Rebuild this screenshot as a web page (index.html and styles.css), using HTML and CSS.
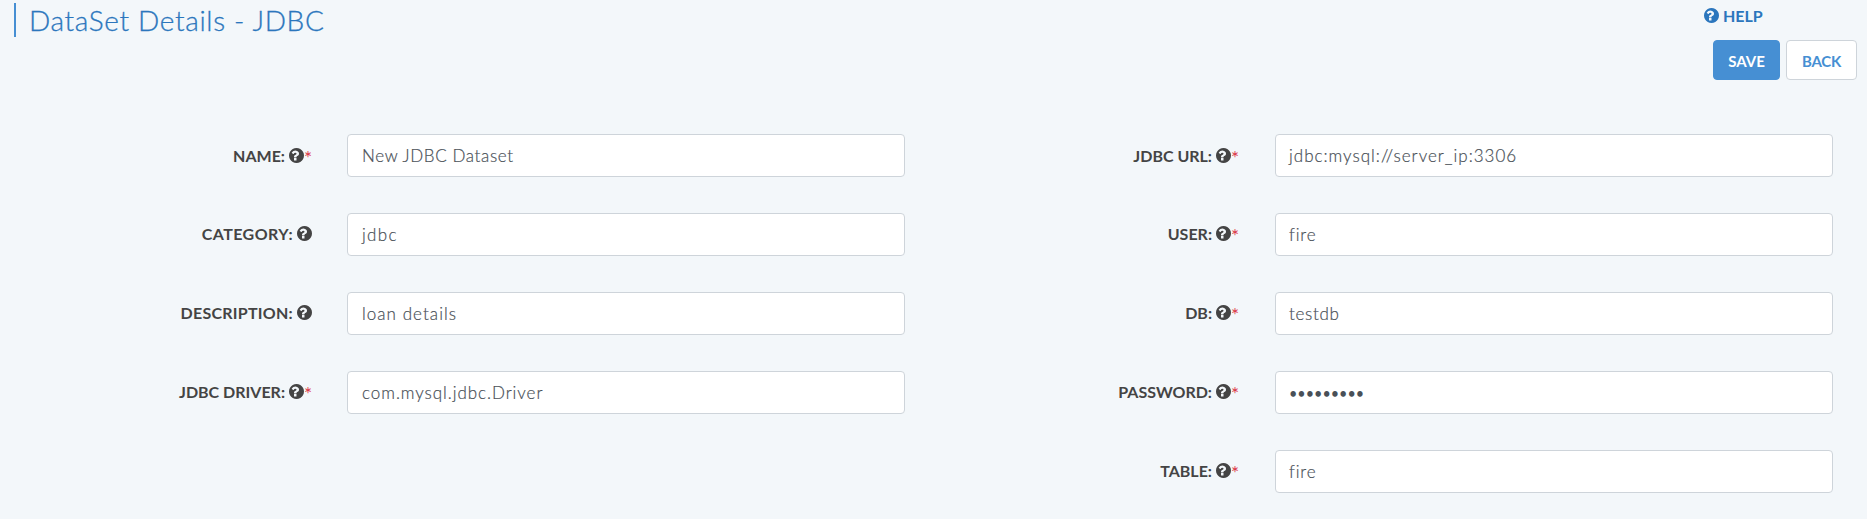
FILE: index.html
```html
<!DOCTYPE html>
<html lang="en">
<head>
<meta charset="utf-8">
<title>DataSet Details - JDBC</title>
<link rel="stylesheet" href="styles.css">
</head>
<body>
<svg class="sprite" aria-hidden="true">
<symbol id="question" viewBox="128 128 1536 1536"><path d="M896 1376v-192q0-14-9-23t-23-9h-192q-14 0-23 9t-9 23v192q0 14 9 23t23 9h192q14 0 23-9t9-23zm256-672q0-88-55.500-163t-138.500-116-170-41q-243 0-371 213-15 24 8 42l132 100q7 6 19 6 16 0 25-12 53-68 86-92 34-24 86-24 48 0 85.500 26t37.500 59q0 38-20 61t-68 45q-63 28-115.500 86.500t-52.500 125.500v36q0 14 9 23t23 9h192q14 0 23-9t9-23q0-19 21.500-49.500t54.500-49.500q32-18 49-28.500t46-35 44.500-48 28-60.500 12.500-81zm512 192q0 209-103 385.500t-279.500 279.500-385.500 103-385.500-103-279.500-279.500-103-385.500 103-385.500 279.500-279.500 385.500-103 385.500 103 279.500 279.500 103 385.500z"/></symbol>
</svg>
<header class="header">
  <h1 class="title">DataSet Details - JDBC</h1>
  <div class="actions">
    <a class="help"><svg class="icon"><use href="#question"/></svg><span>HELP</span></a>
    <div class="buttons">
      <button class="btn btn-save">SAVE</button>
      <button class="btn btn-back">BACK</button>
    </div>
  </div>
</header>
<main class="form">
  <div class="column">
    <div class="row"><label class="label"><span class="t-name">NAME:</span><svg class="icon"><use href="#question"/></svg><span class="star">*</span></label><div class="input"><span class="v-name">New JDBC Dataset</span></div></div>
    <div class="row"><label class="label"><span class="t-category">CATEGORY:</span><svg class="icon"><use href="#question"/></svg></label><div class="input"><span class="v-category">jdbc</span></div></div>
    <div class="row"><label class="label"><span class="t-description">DESCRIPTION:</span><svg class="icon"><use href="#question"/></svg></label><div class="input"><span class="v-description">loan details</span></div></div>
    <div class="row"><label class="label"><span>JDBC DRIVER:</span><svg class="icon"><use href="#question"/></svg><span class="star">*</span></label><div class="input"><span class="v-driver">com.mysql.jdbc.Driver</span></div></div>
  </div>
  <div class="column column-right">
    <div class="row"><label class="label"><span>JDBC URL:</span><svg class="icon"><use href="#question"/></svg><span class="star">*</span></label><div class="input"><span class="v-url">jdbc:mysql://server_ip:3306</span></div></div>
    <div class="row"><label class="label"><span class="t-user">USER:</span><svg class="icon"><use href="#question"/></svg><span class="star">*</span></label><div class="input"><span class="v-fire">fire</span></div></div>
    <div class="row"><label class="label"><span>DB:</span><svg class="icon"><use href="#question"/></svg><span class="star">*</span></label><div class="input"><span class="v-db">testdb</span></div></div>
    <div class="row"><label class="label"><span>PASSWORD:</span><svg class="icon"><use href="#question"/></svg><span class="star">*</span></label><div class="input"><span class="v-password">•••••••••</span></div></div>
    <div class="row"><label class="label"><span>TABLE:</span><svg class="icon"><use href="#question"/></svg><span class="star">*</span></label><div class="input"><span class="v-fire">fire</span></div></div>
  </div>
</main>
</body>
</html>
```
FILE: styles.css
```css
* { box-sizing: border-box; }
body {
  margin: 0;
  height: 519px;
  overflow: hidden;
  background: #f3f7fa;
  color: #444;
  font-family: Lato, "Open Sans", sans-serif;
  font-size: 16px;
}
.sprite { display: none; }
.icon { width: 15px; height: 15px; flex: none; fill: currentColor; }

.header {
  display: flex;
  justify-content: space-between;
  height: 134px;
  padding: 3px 10px 0 14px;
}
.title {
  margin: 0;
  height: 34px;
  padding-left: 13px;
  border-left: 2px solid #468fd3;
  color: #2b76bd;
  font-size: 28px;
  font-weight: 300;
  line-height: 34px;
  letter-spacing: 0.66px;
  white-space: nowrap;
  -webkit-text-stroke: 0.3px currentColor;
}
.actions { width: 144px; }
.help {
  display: flex;
  align-items: center;
  gap: 4px;
  height: 25px;
  margin-left: -9px;
  color: #2b76bd;
  font-weight: 700;
}
.buttons { display: flex; gap: 6px; margin-top: 12px; }
.btn {
  height: 40px;
  padding: 2px 0 0;
  border: 1px solid #468fd3;
  border-radius: 4px;
  font: 700 15px Lato, "Open Sans", sans-serif;
  text-align: center;
}
.btn-save { width: 67px; background: #468fd3; color: #fff; }
.btn-back { width: 71px; background: #fff; border-color: #ced4da; color: #468fd3; letter-spacing: -0.2px; }

.form { display: flex; gap: 186px; padding-left: 162px; }
.column { display: grid; grid-auto-rows: 43px; row-gap: 36px; width: 743px; align-content: start; }
.column-right { width: 742px; }
.row { display: flex; justify-content: space-between; }
.label {
  display: flex;
  align-items: center;
  justify-content: flex-end;
  gap: 4px;
  width: 150px;
  height: 43px;
  font-weight: 700;
  white-space: nowrap;
}
.row + .row .label { padding-bottom: 2px; }
.column-right .label { width: 148px; }
.t-category { letter-spacing: 0.45px; }
.t-description { letter-spacing: 0.25px; }
.star {
  width: 8px;
  height: 19px;
  margin-left: -4px;
  color: #dc3545;
  font-size: 19px;
  font-weight: 400;
  line-height: 23px;
  text-align: center;
}
.input {
  display: flex;
  align-items: center;
  width: 558px;
  height: 43px;
  padding-left: 14px;
  border: 1px solid #ced4da;
  border-radius: 4px;
  background: #fff;
  color: #495057;
  font-size: 17px;
  font-weight: 300;
  white-space: nowrap;
  -webkit-text-stroke: 0.2px currentColor;
}
.column-right .input { padding-left: 13px; }
.v-name { letter-spacing: 0.62px; }
.v-category { letter-spacing: 1.3px; }
.v-description { letter-spacing: 1.05px; }
.v-driver { letter-spacing: 0.95px; }
.v-url { letter-spacing: 1px; }
.v-fire { letter-spacing: 0.9px; }
.v-db { letter-spacing: 0.7px; }
.v-password { padding-top: 1px; font-size: 14.400px; font-weight: 400; -webkit-text-stroke: 0; }
```
